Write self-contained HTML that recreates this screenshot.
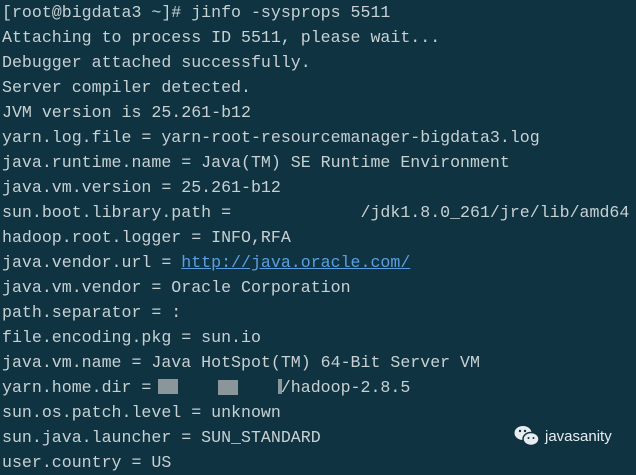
<!DOCTYPE html>
<html><head><meta charset="utf-8"><style>
html,body{margin:0;padding:0;width:636px;height:465px;overflow:hidden;background:#0f3341;}
pre{margin:0;position:absolute;left:2px;top:0;font-family:"Liberation Mono",monospace;font-size:16.6px;line-height:25px;color:#c7d1d4;}
a{color:#5b9fe0;text-decoration:underline;}
.box{position:absolute;background:#8a969a;height:15px;}
.wm{position:absolute;left:512px;top:424px;color:#e8eef0;font-family:"Liberation Sans",sans-serif;font-size:15px;}
</style></head><body>
<pre>[root@bigdata3 ~]# jinfo -sysprops 5511
Attaching to process ID 5511, please wait...
Debugger attached successfully.
Server compiler detected.
JVM version is 25.261-b12
yarn.log.file = yarn-root-resourcemanager-bigdata3.log
java.runtime.name = Java(TM) SE Runtime Environment
java.vm.version = 25.261-b12
sun.boot.library.path =             /jdk1.8.0_261/jre/lib/amd64
hadoop.root.logger = INFO,RFA
java.vendor.url = <a>http://java.oracle.com/</a>
java.vm.vendor = Oracle Corporation
path.separator = :
file.encoding.pkg = sun.io
java.vm.name = Java HotSpot(TM) 64-Bit Server VM
yarn.home.dir =             /hadoop-2.8.5
sun.os.patch.level = unknown
sun.java.launcher = SUN_STANDARD
user.country = US</pre>
<div class="box" style="left:158px;top:379px;width:20px;"></div>
<div class="box" style="left:218px;top:380px;width:20px;"></div>
<div class="box" style="left:278px;top:379px;width:4px;"></div>
<svg style="position:absolute;left:514px;top:425px" width="26" height="22" viewBox="0 0 26 22">
<ellipse cx="9" cy="8" rx="8.5" ry="7" fill="#e8eef0"/>
<ellipse cx="17" cy="14" rx="8" ry="6.5" fill="#e8eef0" stroke="#0f3341" stroke-width="1.5"/>
<circle cx="6" cy="6" r="1.2" fill="#0f3341"/><circle cx="11" cy="6" r="1.2" fill="#0f3341"/>
<circle cx="14.5" cy="13" r="1" fill="#0f3341"/><circle cx="19.5" cy="13" r="1" fill="#0f3341"/>
</svg>
<div class="wm" style="left:545px;top:428px;">javasanity</div>
</body></html>
